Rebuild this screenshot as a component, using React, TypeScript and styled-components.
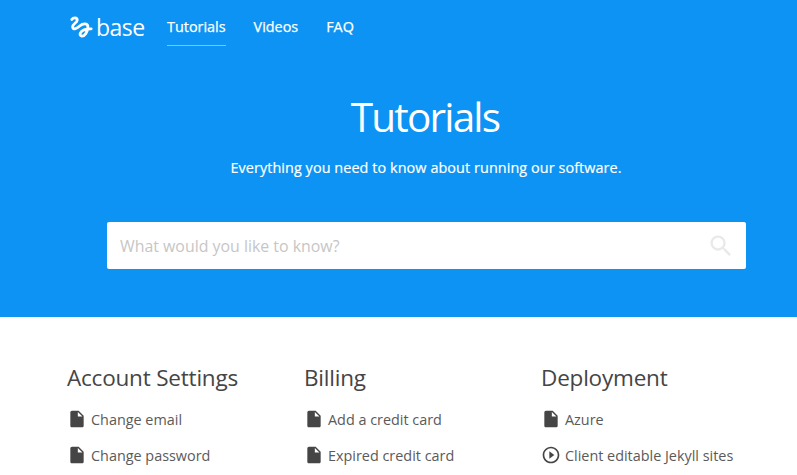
import React from "react";
import styled, { createGlobalStyle } from "styled-components";

const GlobalStyle = createGlobalStyle`
  * { box-sizing: border-box; }
  body { margin: 0; overflow: hidden; background: #fff; color: #454545; font-family: "Open Sans", sans-serif; }
  h1, h2, p, ul { margin: 0; padding: 0; font-weight: 400; }
  a { color: inherit; text-decoration: none; }
`;

const Page = styled.div`
  height: 475px;
  overflow: hidden;
`;

const Hero = styled.header`
  height: 317px;
  background: #0c93f3;
  color: #fff;
`;

const Nav = styled.nav`
  display: flex;
  align-items: flex-start;
  height: 54px;
  padding-left: 69px;
`;

const Brand = styled.a`
  display: flex;
  width: 98px;
  height: 54px;
  align-items: center;
  gap: 3px;
  font-size: 23px;
  letter-spacing: -0.5px;
  line-height: 54px;
`;

const NavLink = styled.a<{ $active?: boolean }>`
  height: 46px;
  margin-right: 28px;
  border-bottom: 1px solid ${(p) => (p.$active ? "#7dc6fa" : "transparent")};
  font-size: 14.4px;
  -webkit-text-stroke: 0.25px currentColor;
  line-height: 54px;
`;

const Title = styled.h1`
  margin-top: 33px;
  padding-left: 53px;
  text-align: center;
  font-size: 40.5px;
  line-height: 60px;
  letter-spacing: -1.8px;
`;

const Lead = styled.p`
  padding-left: 55px;
  margin-top: 9px;
  text-align: center;
  font-size: 14.4px;
  letter-spacing: 0.08px;
  -webkit-text-stroke: 0.2px currentColor;
  line-height: 24px;
`;

const SearchBox = styled.form`
  display: flex;
  align-items: center;
  width: 639px;
  height: 47px;
  margin: 42px 0 0 107px;
  padding: 0 11px 0 13px;
  border-radius: 2px;
  background: #fff;
`;

const SearchInput = styled.input`
  flex: 1;
  min-width: 0;
  padding: 0;
  border: 0;
  outline: 0;
  background: transparent;
  font: 400 15.9px "Open Sans", sans-serif;
  &::placeholder { color: #c6c6c6; opacity: 1; }
`;

const Columns = styled.main`
  display: grid;
  grid-template-columns: repeat(3, 237px);
  padding: 44px 0 0 67px;
`;

const Heading = styled.h2`
  font-size: 22.5px;
  letter-spacing: -0.2px;
  line-height: 34px;
  margin-bottom: 6px;
  white-space: nowrap;
`;

const List = styled.ul`
  list-style: none;
`;

const Item = styled.li`
  display: flex;
  align-items: center;
  height: 36px;
  gap: 4px;
  color: #5a5a5a;
  font-size: 14.4px;
  white-space: nowrap;
  svg { color: #454545; }
`;

const Icon = ({ d, size, color = "currentColor" }: { d: string; size: number; color?: string }) => (
  <svg width={size} height={size} viewBox="0 0 24 24" fill={color} aria-hidden="true">
    <path d={d} />
  </svg>
);

const ICONS = {
  file: "M6 2c-1.1 0-1.99.9-1.99 2L4 20c0 1.1.89 2 1.99 2H18c1.1 0 2-.9 2-2V8l-6-6H6zm7 7V3.5L18.5 9H13z",
  video:
    "M10 16.5l6-4.5-6-4.5v9zM12 2C6.48 2 2 6.48 2 12s4.48 10 10 10 10-4.48 10-10S17.52 2 12 2zm0 18c-4.41 0-8-3.59-8-8s3.59-8 8-8 8 3.59 8 8-3.59 8-8 8z",
  search:
    "M15.5 14h-.79l-.28-.27C15.41 12.59 16 11.11 16 9.5 16 5.91 13.09 3 9.5 3S3 5.91 3 9.5 5.91 16 9.5 16c1.61 0 3.09-.59 4.23-1.57l.27.28v.79l5 4.99L20.49 19l-4.99-5zm-6 0C7.01 14 5 11.99 5 9.5S7.01 5 9.5 5 14 7.01 14 9.5 11.99 14 9.5 14z",
};

const Logo = () => (
  <svg width="24" height="24" viewBox="0 0 24 24" fill="none" stroke="#fff" strokeWidth="2.8" strokeLinecap="round" strokeLinejoin="round" aria-hidden="true">
    <path d="M2.8 4.6C4.2 2.4 8.2 2.1 8.2 5.2C8.2 7.8 3.4 9 3.6 12C3.9 15.6 8.3 13.2 11 10.8C14.2 8 19.2 8 18.9 12.4C18.6 17 15.6 21.4 12.8 21C9.4 20.4 11.4 16.2 15 14.9C17.5 14 20 13.8 22.2 13.8" />
  </svg>
);

const sections: { title: string; items: { label: string; kind: "file" | "video" }[] }[] = [
  { title: "Account Settings", items: [{ label: "Change email", kind: "file" }, { label: "Change password", kind: "file" }] },
  { title: "Billing", items: [{ label: "Add a credit card", kind: "file" }, { label: "Expired credit card", kind: "file" }] },
  { title: "Deployment", items: [{ label: "Azure", kind: "file" }, { label: "Client editable Jekyll sites", kind: "video" }] },
];

export default function App() {
  return (
    <Page>
      <GlobalStyle />
      <Hero>
        <Nav>
          <Brand href="#"><Logo />base</Brand>
          <NavLink href="#" $active>Tutorials</NavLink>
          <NavLink href="#">Videos</NavLink>
          <NavLink href="#">FAQ</NavLink>
        </Nav>
        <Title>Tutorials</Title>
        <Lead>Everything you need to know about running our software.</Lead>
        <SearchBox>
          <SearchInput placeholder="What would you like to know?" />
          <Icon d={ICONS.search} size={28} color="#e9e9e9" />
        </SearchBox>
      </Hero>
      <Columns>
        {sections.map((s) => (
          <section key={s.title}>
            <Heading>{s.title}</Heading>
            <List>
              {s.items.map((i) => (
                <Item key={i.label}>
                  <Icon d={ICONS[i.kind]} size={20} />
                  <a href="#">{i.label}</a>
                </Item>
              ))}
            </List>
          </section>
        ))}
      </Columns>
    </Page>
  );
}
